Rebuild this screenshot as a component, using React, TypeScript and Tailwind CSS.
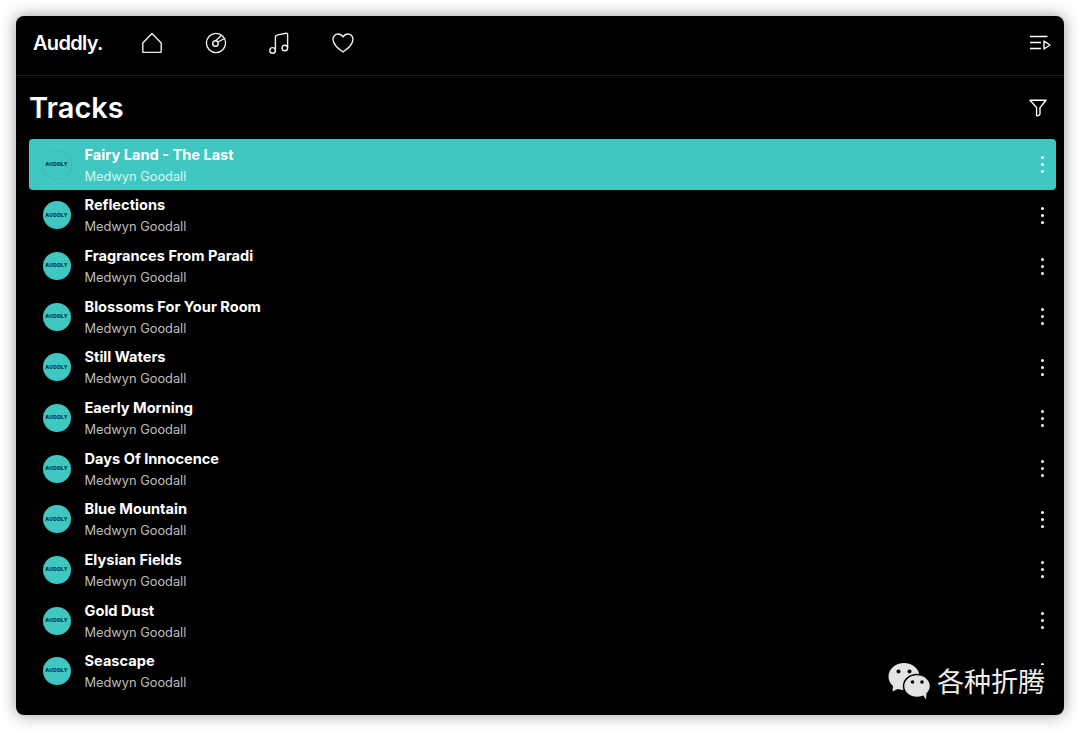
import React from 'react';

const tracks = [
  'Fairy Land - The Last',
  'Reflections',
  'Fragrances From Paradi',
  'Blossoms For Your Room',
  'Still Waters',
  'Eaerly Morning',
  'Days Of Innocence',
  'Blue Mountain',
  'Elysian Fields',
  'Gold Dust',
  'Seascape',
];

const HomeIcon = () => (
  <svg width="24" height="24" viewBox="0 0 24 24" fill="none" stroke="currentColor" strokeWidth="1.4">
    <path d="M12 2.6 21.2 12v8.8a.6.6 0 0 1-.6.6H3.4a.6.6 0 0 1-.6-.6V12z" strokeLinejoin="round" />
  </svg>
);

const DiscIcon = () => (
  <svg width="24" height="24" viewBox="0 0 24 24" fill="none" stroke="currentColor" strokeWidth="1.4">
    <circle cx="12" cy="12" r="9.6" />
    <circle cx="11.5" cy="12.5" r="2.8" />
    <path d="M14 11 20.5 7.5M12 9.6 17 4.5" strokeLinecap="round" />
  </svg>
);

const NotesIcon = () => (
  <svg width="24" height="24" viewBox="0 0 24 24" fill="none" stroke="currentColor" strokeWidth="1.4">
    <circle cx="5.6" cy="19.4" r="2.8" />
    <circle cx="17.8" cy="17" r="2.8" />
    <path d="M8.4 19.4V6.5c0-1.6.7-2.3 2.2-2.6l8.6-1.7c1-.2 1.4.3 1.4 1.2V17" strokeLinejoin="round" />
  </svg>
);

const HeartIcon = () => (
  <svg width="24" height="24" viewBox="0 0 24 24" fill="none" stroke="currentColor" strokeWidth="1.4">
    <path d="M12 21C6.500 16.800 2 13.200 2 8.300 2 5.200 4.400 3 7.100 3c2 0 3.800 1 4.900 3 1.100-2 2.900-3 4.900-3C19.600 3 22 5.200 22 8.300 22 13.200 17.500 16.800 12 21z" strokeLinejoin="round" />
  </svg>
);

const QueueIcon = () => (
  <svg width="22" height="16" viewBox="0 0 22 16" fill="none" stroke="currentColor" strokeWidth="1.4">
    <path d="M1 1.500h17.500M1 7.500h11M1 13.500h11" />
    <path d="M15 6v8l6-4z" strokeLinejoin="round" />
  </svg>
);

const FunnelIcon = () => (
  <svg width="18" height="18" viewBox="0 0 18 18" fill="none" stroke="currentColor" strokeWidth="1.4">
    <path d="M1 1.200h16L11 8.600v6.200c0 1.600-3.400 2.800-3.400 1.600V8.600z" strokeLinejoin="round" />
  </svg>
);

const WeChatIcon = () => (
  <svg width="44" height="38" viewBox="0 0 44 38" fill="#e4e4e4">
    <ellipse cx="16" cy="14.500" rx="15.500" ry="13.500" />
    <path d="M5 23 4.500 29.500 12 26z" />
    <ellipse cx="29" cy="24" rx="13.500" ry="11.500" stroke="#000" strokeWidth="1.500" />
    <path d="M35 33 38 37.500 38.500 31z" />
    <circle cx="10.500" cy="9.500" r="2" fill="#000" />
    <circle cx="21.500" cy="9.500" r="2" fill="#000" />
    <circle cx="24.500" cy="20" r="1.800" fill="#000" />
    <circle cx="34" cy="20" r="1.800" fill="#000" />
  </svg>
);

const TrackRow = ({ title, active }: { title: string; active: boolean }) => (
  <div className={`flex h-[50.65px] items-center rounded pl-[13.5px] pr-[12px] ${active ? 'bg-[#3fc8c1]' : ''}`}>
    <div className={`mt-[1px] flex h-[28px] w-[28px] shrink-0 items-center justify-center rounded-full bg-[#3fc8c1] ${active ? 'ring-1 ring-[#3abdb6]' : ''}`}>
      <span className="text-[5px] font-extrabold tracking-[0.3px] text-[#06302e]">AUDDLY</span>
    </div>
    <div className="ml-[14px] flex-1 pt-[3px]">
      <div className="text-[14.6px] leading-[21px] font-bold text-white">{title}</div>
      <div className={`text-[12.8px] leading-[21px] ${active ? 'text-[#d8f5f3]' : 'text-[#bdbdbd]'}`}>Medwyn Goodall</div>
    </div>
    <div className="mt-[1px] flex flex-col gap-[4px]">
      <span className="h-[3px] w-[3px] rounded-full bg-white" />
      <span className="h-[3px] w-[3px] rounded-full bg-white" />
      <span className="h-[3px] w-[3px] rounded-full bg-white" />
    </div>
  </div>
);

export default function App() {
  return (
    <div className="h-[731px] w-[1080px] overflow-hidden bg-white p-4 font-['Inter',sans-serif]">
      <div className="relative h-[699px] w-[1048px] overflow-hidden rounded-lg bg-black text-white shadow-[0_0_16px_rgba(0,0,0,0.4)]">
        <header className="flex h-[60px] items-center border-b border-[#1c1c1c] pb-[5px] pl-[17px] pr-[13px]">
          <div className="w-[107px] text-[20px] font-semibold tracking-[-0.7px]">Auddly.</div>
          <nav className="flex flex-1 items-center text-[#f0f0f0]">
            <HomeIcon />
            <span className="ml-[40px]"><DiscIcon /></span>
            <span className="ml-[39px]"><NotesIcon /></span>
            <span className="ml-[40px]"><HeartIcon /></span>
          </nav>
          <QueueIcon />
        </header>

        <div className="flex h-[63px] items-center justify-between pt-[1px] pl-[13px] pr-[17px]">
          <h1 className="text-[29px] font-semibold">Tracks</h1>
          <FunnelIcon />
        </div>

        <div className="pl-[13px] pr-[8px]">
          {tracks.map((title, i) => (
            <TrackRow key={title} title={title} active={i === 0} />
          ))}
        </div>

        <div className="absolute bottom-[15px] right-[19px] flex items-center gap-[5px] pl-1">
          <WeChatIcon />
          <span className="bg-black text-[27px] leading-[32px] text-[#eeeeee] font-['Noto_Sans_CJK_SC',sans-serif]">各种折腾</span>
        </div>
      </div>
    </div>
  );
}
